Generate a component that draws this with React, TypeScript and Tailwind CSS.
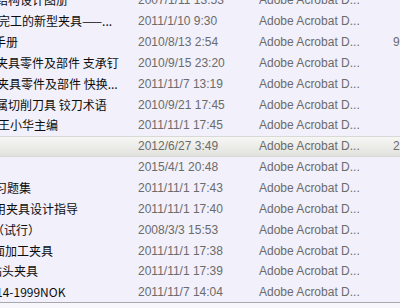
const rows: { name: string; shift: string; date: string; size?: string; selected?: boolean }[] = [
  { name: "结构设计图册", shift: "-ml-[4px]", date: "2007/1/11 13:53" },
  { name: "完工的新型夹具——...", shift: "-ml-[2px]", date: "2011/1/10 9:30" },
  { name: "手册", shift: "-ml-[6px]", date: "2010/8/13 2:54", size: "9" },
  { name: "夹具零件及部件 支承钉", shift: "-ml-[4px]", date: "2010/9/15 23:20" },
  { name: "夹具零件及部件 快换...", shift: "-ml-[3px]", date: "2011/11/7 13:19" },
  { name: "属切削刀具 铰刀术语", shift: "-ml-[4px]", date: "2010/9/21 17:45" },
  { name: "王小华主编", shift: "-ml-[2px]", date: "2011/11/1 17:45" },
  { name: "", shift: "", date: "2012/6/27 3:49", size: "2", selected: true },
  { name: "", shift: "", date: "2015/4/1 20:48" },
  { name: "习题集", shift: "-ml-[5px]", date: "2011/11/1 17:43" },
  { name: "用夹具设计指导", shift: "-ml-[6px]", date: "2011/11/1 17:40" },
  { name: "（试行）", shift: "-ml-[8px]", date: "2008/3/3 15:53" },
  { name: "面加工夹具", shift: "-ml-[7px]", date: "2011/11/1 17:38" },
  { name: "钻头夹具", shift: "-ml-[10px]", date: "2011/11/1 17:39" },
  { name: "14-1999NOK", shift: "-ml-[4px]", date: "2011/11/7 14:04" },
];

export default function App() {
  return (
    <div className="w-[400px] h-[308px] overflow-hidden bg-[#f7f7fc]">
      <div className="h-[303px] overflow-hidden bg-[#f1f0fb] border-b border-[#a7a7ad]">
        <div className="-mt-[10px]">
          {rows.map((r, i) => (
            <div
              key={i}
              className={
                r.selected
                  ? "flex items-center h-[20.85px] border-y border-[#d8d8d6] bg-gradient-to-b from-[#f6f6f4] via-[#ecece9] to-[#e1e1dd]"
                  : "flex items-center h-[20.85px]"
              }
            >
              <div className="w-[138px] shrink-0 overflow-hidden whitespace-nowrap">
                <span
                  className={`block ${r.shift} text-[12px] text-[#0c0c0c] [font-family:'Noto_Sans_CJK_SC','Noto_Sans',sans-serif]`}
                >
                  {r.name}
                </span>
              </div>
              <div className="w-[121px] shrink-0 whitespace-nowrap text-[12px] text-[#6b6b6b] [font-family:'Liberation_Sans',Arial,sans-serif]">
                {r.date}
              </div>
              <div className="w-[134px] shrink-0 whitespace-nowrap text-[12px] text-[#6b6b6b] [font-family:'Liberation_Sans',Arial,sans-serif]">
                Adobe Acrobat D...
              </div>
              <div className="flex-1 whitespace-nowrap text-[12px] text-[#6b6b6b] [font-family:'Liberation_Sans',Arial,sans-serif]">
                {r.size ?? ""}
              </div>
            </div>
          ))}
        </div>
      </div>
    </div>
  );
}
